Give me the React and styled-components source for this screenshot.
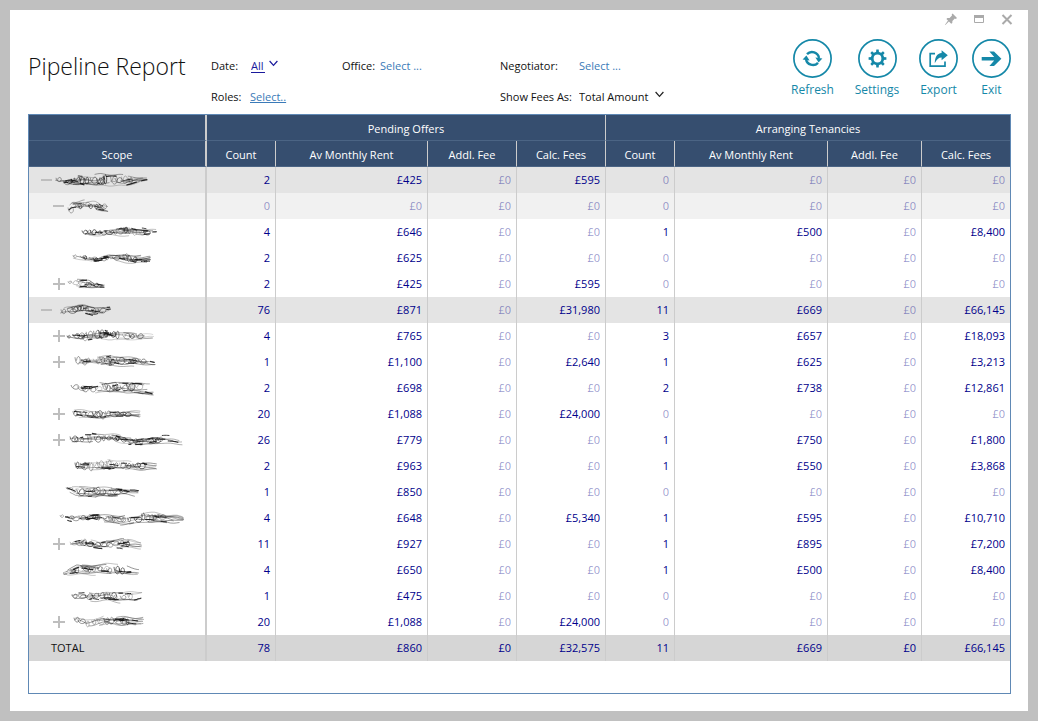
import React from "react";
import styled, { createGlobalStyle } from "styled-components";

const GlobalStyle = createGlobalStyle`
  *, *::before, *::after { box-sizing: border-box; }
  body { margin: 0; background: #c0c0c0; }
  body, button, select {
    font-family: "Open Sans", "Noto Sans", sans-serif;
    font-size: 11px;
    color: #111;
  }
`;

const Desktop = styled.div`
  display: flex;
  min-height: 100vh;
  padding: 10px;
`;

const WindowFrame = styled.main`
  flex: 1;
  min-width: 0;
  display: flex;
  flex-direction: column;
  padding: 0 17px 17px 18px;
  background: #fff;
`;

const TitleBar = styled.div`
  display: flex;
  justify-content: flex-end;
  gap: 12px;
  height: 18px;
  margin-right: -4px;
`;

const WindowButton = styled.button`
  width: 16px;
  height: 18px;
  padding: 0;
  border: 0;
  background: none;
  svg { display: block; }
`;

const Header = styled.header`
  display: flex;
  height: 86px;
`;

const Title = styled.h1`
  width: 183px;
  margin: 22px 0 0;
  font-size: 23px;
  line-height: 32px;
  font-weight: 300;
  white-space: nowrap;
`;

const Filters = styled.form`
  flex: 1;
  display: grid;
  grid-template-columns: 131px 158px auto;
  grid-template-rows: 31px 31px;
  align-content: start;
  padding-top: 22px;
`;

const Field = styled.div`
  display: flex;
  align-items: center;
  grid-column: ${(p) => p.$column};
  white-space: nowrap;
  line-height: 16px;
`;

const FieldLabel = styled.label`
  width: ${(p) => p.$width}px;
`;

const PickLink = styled.button`
  padding: 0;
  border: 0;
  background: none;
  color: #3a7ab8;
  line-height: 16px;
  text-decoration: ${(p) => (p.$underlined ? "underline" : "none")};
`;

const DropDown = styled.select`
  appearance: none;
  width: ${(p) => p.$width}px;
  height: ${(p) => (p.$linked ? 14 : 16)}px;
  padding: 0;
  border: 0;
  border-bottom: ${(p) => (p.$linked ? "1px solid #1a1a9c" : "0")};
  border-radius: 0;
  background: none;
  color: ${(p) => (p.$linked ? "#1a1a9c" : "#111")};
  line-height: 14px;
`;

const Caret = styled.svg`
  margin: 0 0 4px 4px;
`;

const Actions = styled.nav`
  display: flex;
  gap: 14px;
  padding-top: 11px;
`;

const ActionButton = styled.button`
  display: flex;
  flex-direction: column;
  align-items: center;
  width: ${(p) => p.$width}px;
  height: 62px;
  padding: 0;
  border: 0;
  background: none;
  color: #1588a8;
  font-size: 12px;
  line-height: 18px;
  white-space: nowrap;
  svg { flex: none; margin-bottom: 3px; }
`;

const Grid = styled.section`
  flex: 1;
  border: 1px solid #6089b5;
  padding-bottom: 32px;
`;

const Table = styled.table`
  width: 100%;
  table-layout: fixed;
  border-collapse: separate;
  border-spacing: 0;
`;

const divider = (edge) =>
  edge === "scope" ? "2px solid #ccc" : edge === "none" ? "0" : "1px solid #ccc";

const HeadCell = styled.th`
  height: 26px;
  padding: 2px 0 0;
  background: #364e6f;
  border-right: ${(p) => divider(p.$edge)};
  border-bottom: 1px solid #4b6484;
  color: #fff;
  font-weight: 400;
  line-height: 16px;
  text-align: center;
  white-space: nowrap;
`;

const tones = { group: "#e4e4e4", sub: "#f1f1f1", plain: "#fff", total: "#d6d6d6" };

const Row = styled.tr`
  background: ${(p) => tones[p.$tone]};
`;

const ScopeCell = styled.th`
  height: 26px;
  padding: 0;
  border-right: 2px solid #ccc;
  font-weight: 400;
  line-height: 16px;
  text-align: left;
`;

const ScopeContent = styled.div`
  display: flex;
  align-items: center;
  height: 26px;
  padding-left: ${(p) => p.$indent}px;
`;

const Expander = styled.button`
  flex: none;
  width: 12px;
  height: 12px;
  padding: 0;
  border: 0;
  background: none;
  svg { display: block; }
`;

const ExpanderSpace = styled.span`
  flex: none;
  width: 12px;
`;

const Scrawl = styled.svg`
  flex: none;
  overflow: visible;
  width: 100px;
  height: 26px;
`;

const NumberCell = styled.td`
  height: 26px;
  padding: 0 5px 0 0;
  border-right: ${(p) => divider(p.$edge)};
  color: ${(p) => (p.$faded ? "rgba(0, 0, 139, 0.42)" : "#00008b")};
  line-height: 16px;
  text-align: right;
`;

const columnWidths = [178, 69, 152, 89, 89, 69, 153, 94, 88];
const measures = ["Count", "Av Monthly Rent", "Addl. Fee", "Calc. Fees"];

// spine: points of [x, centre y, half height] measured from the scope cell's left edge
const rows = [
  { tone: "group", indent: 12, sign: "-", spine: [[26, 13, 4], [31, 15, 3], [45, 13, 5], [72, 13, 6], [95, 14, 5], [119, 12, 1]], v: ["2", "£425", "£0", "£595", "0", "£0", "£0", "£0"] },
  { tone: "sub", indent: 24, sign: "-", spine: [[38, 18, 4], [43, 14, 5], [54, 12, 4], [66, 13, 5], [80, 17, 3]], v: ["0", "£0", "£0", "£0", "0", "£0", "£0", "£0"] },
  { tone: "plain", indent: 24, spine: [[52, 13, 3], [64, 13, 4], [77, 14, 2], [90, 12, 5], [107, 13, 5], [132, 12, 3]], v: ["4", "£646", "£0", "£0", "1", "£500", "£0", "£8,400"] },
  { tone: "plain", indent: 24, spine: [[43, 11, 2], [55, 13, 3], [66, 15, 2], [80, 12, 4], [105, 14, 5], [122, 13, 4]], v: ["2", "£625", "£0", "£0", "0", "£0", "£0", "£0"] },
  { tone: "plain", indent: 24, sign: "+", spine: [[38, 11, 2], [45, 13, 5], [60, 13, 4], [66, 15, 2], [76, 16, 1]], v: ["2", "£425", "£0", "£595", "0", "£0", "£0", "£0"] },
  { tone: "group", indent: 12, sign: "-", spine: [[31, 15, 3], [44, 12, 4], [55, 12, 5], [67, 14, 4], [82, 12, 2]], v: ["76", "£871", "£0", "£31,980", "11", "£669", "£0", "£66,145"] },
  { tone: "plain", indent: 24, sign: "+", spine: [[37, 13, 3], [52, 13, 5], [72, 12, 6], [95, 13, 5], [125, 14, 4]], v: ["4", "£765", "£0", "£0", "3", "£657", "£0", "£18,093"] },
  { tone: "plain", indent: 24, sign: "+", spine: [[45, 12, 5], [62, 12, 4], [80, 12, 5], [106, 13, 4], [127, 15, 2]], v: ["1", "£1,100", "£0", "£2,640", "1", "£625", "£0", "£3,213"] },
  { tone: "plain", indent: 24, spine: [[41, 11, 3], [55, 14, 5], [71, 12, 5], [95, 12, 5], [125, 15, 5]], v: ["2", "£698", "£0", "£0", "2", "£738", "£0", "£12,861"] },
  { tone: "plain", indent: 24, sign: "+", spine: [[43, 13, 4], [55, 13, 5], [68, 14, 5], [87, 13, 3], [112, 13, 4]], v: ["20", "£1,088", "£0", "£24,000", "0", "£0", "£0", "£0"] },
  { tone: "plain", indent: 24, sign: "+", spine: [[40, 13, 4], [62, 11, 5], [84, 11, 4], [107, 15, 4], [130, 12, 4], [154, 14, 3]], v: ["26", "£779", "£0", "£0", "1", "£750", "£0", "£1,800"] },
  { tone: "plain", indent: 24, spine: [[45, 13, 5], [62, 13, 6], [80, 12, 5], [103, 13, 4], [128, 13, 4]], v: ["2", "£963", "£0", "£0", "1", "£550", "£0", "£3,868"] },
  { tone: "plain", indent: 24, spine: [[36, 9, 1], [47, 13, 5], [64, 13, 5], [88, 13, 4], [110, 15, 3]], v: ["1", "£850", "£0", "£0", "0", "£0", "£0", "£0"] },
  { tone: "plain", indent: 24, spine: [[30, 11, 2], [43, 14, 4], [65, 12, 4], [92, 15, 5], [118, 12, 5], [155, 15, 3]], v: ["4", "£648", "£0", "£5,340", "1", "£595", "£0", "£10,710"] },
  { tone: "plain", indent: 24, sign: "+", spine: [[40, 13, 3], [54, 12, 5], [72, 14, 3], [92, 13, 5], [113, 15, 4]], v: ["11", "£927", "£0", "£0", "1", "£895", "£0", "£7,200"] },
  { tone: "plain", indent: 24, spine: [[33, 17, 1], [48, 12, 5], [63, 13, 4], [76, 12, 5], [95, 13, 5], [110, 15, 3]], v: ["4", "£650", "£0", "£0", "1", "£500", "£0", "£8,400"] },
  { tone: "plain", indent: 24, spine: [[42, 13, 4], [60, 13, 5], [80, 13, 4], [96, 14, 5], [114, 13, 4]], v: ["1", "£475", "£0", "£0", "0", "£0", "£0", "£0"] },
  { tone: "plain", indent: 24, sign: "+", spine: [[44, 10, 3], [57, 15, 4], [75, 12, 5], [93, 13, 5], [115, 13, 4]], v: ["20", "£1,088", "£0", "£24,000", "0", "£0", "£0", "£0"] },
];
const total = ["78", "£860", "£0", "£32,575", "11", "£669", "£0", "£66,145"];

const edgeOf = (i) => (i === 7 ? "none" : "line");

function randomFrom(seed) {
  let s = seed * 7919 + 17;
  return () => {
    s = (s * 16807) % 2147483647;
    return s / 2147483647;
  };
}

function spineAt(spine, x) {
  for (let i = 1; i < spine.length; i++) {
    const a = spine[i - 1];
    const b = spine[i];
    if (x <= b[0]) {
      const t = Math.max(0, (x - a[0]) / (b[0] - a[0]));
      return [a[1] + (b[1] - a[1]) * t, a[2] + (b[2] - a[2]) * t];
    }
  }
  const last = spine[spine.length - 1];
  return [last[1], last[2]];
}

function scrawlStrokes(spine, seed) {
  const rnd = randomFrom(seed);
  const start = spine[0][0];
  const end = spine[spine.length - 1][0];
  const span = end - start;
  const strokes = [];
  const strand = (x0, length, lane, wobble, width, opacity) => {
    const phase = rnd() * 6;
    const drift = (rnd() - 0.5) * 0.5;
    const stop = Math.min(end, x0 + length);
    let d = "";
    for (let x = x0; x <= stop; x += 1.5) {
      const [y, h] = spineAt(spine, x);
      const t = lane + drift * ((x - x0) / length);
      const yy = y + t * h + Math.sin(x * 0.28 + phase) * wobble;
      d += `${d ? "L" : "M"}${x.toFixed(1)} ${yy.toFixed(1)}`;
    }
    strokes.push({ d, width, opacity });
  };
  // long pale strands
  for (let i = 0; i < span / 6; i++) {
    strand(start + rnd() * span * 0.85, 14 + rnd() * 30, rnd() * 2 - 1, 0.3 + rnd() * 0.6, 0.4 + rnd() * 0.3, 0.4 + rnd() * 0.4);
  }
  // short dark dashes
  for (let i = 0; i < span / 9; i++) {
    strand(start + rnd() * span * 0.93, 4 + rnd() * 7, rnd() * 1.9 - 0.95, 0.4, 0.9 + rnd() * 0.4, 0.85);
  }
  // slanted swirls, densest on the left
  for (let x = start + 1; x < start + span * 0.8; x += 3 + rnd() * 5) {
    const [y, h] = spineAt(spine, x);
    const rise = h * (0.7 + rnd() * 0.6);
    const w = 3 + rnd() * 6;
    const cy = y + (rnd() - 0.5) * h * 0.5;
    strokes.push({
      d: `M${x.toFixed(1)} ${(cy - rise / 2).toFixed(1)}C${(x + w * 0.2).toFixed(1)} ${(cy + rise).toFixed(1)} ${(x + w).toFixed(1)} ${(cy + rise * 0.7).toFixed(1)} ${(x + w).toFixed(1)} ${cy.toFixed(1)}S${(x + w * 0.4).toFixed(1)} ${(cy - rise * 0.9).toFixed(1)} ${(x + w * 0.3).toFixed(1)} ${(cy + 0.4).toFixed(1)}`,
      width: 0.4 + rnd() * 0.4,
      opacity: 0.5 + rnd() * 0.4,
    });
  }
  return strokes;
}

function HiddenName({ spine, seed, origin }) {
  return (
    <Scrawl viewBox={`${origin} 0 100 26`} role="img" aria-label="Name hidden" fill="none" stroke="#111">
      {scrawlStrokes(spine, seed).map((s, i) => (
        <path key={i} d={s.d} strokeWidth={s.width} opacity={s.opacity} />
      ))}
    </Scrawl>
  );
}

function ActionIcon({ children }) {
  return (
    <svg width="39" height="39" viewBox="0 0 39 39" fill="none" stroke="#1588a8">
      <circle cx="19.5" cy="19.5" r="18.6" strokeWidth="1.7" />
      {children}
    </svg>
  );
}

const actions = [
  {
    label: "Refresh", width: 45,
    icon: (
      <>
        <path d="M14 15.2A7 7 0 0 1 26 19M25 23.8A7 7 0 0 1 13 20" strokeWidth="2.4" />
        <path d="M22.4 18.4L29.4 19.4L25.6 23.4ZM9.6 20.6L13.4 16.6L16.6 21.6Z" fill="#1588a8" stroke="none" />
      </>
    ),
  },
  {
    label: "Settings", width: 56,
    icon: (
      <>
        <circle cx="19.5" cy="19.5" r="5.3" strokeWidth="2.8" />
        {[0, 45, 90, 135, 180, 225, 270, 315].map((a) => (
          <path key={a} d="M18 14L18.3 10.6H20.7L21 14Z" fill="#1588a8" stroke="none" transform={`rotate(${a} 19.5 19.5)`} />
        ))}
      </>
    ),
  },
  {
    label: "Export", width: 39,
    icon: (
      <>
        <path d="M16 14.6H11.2V27.2H26V22.4" strokeWidth="1.7" />
        <path d="M22.6 11.2L28.8 16.2L22.6 21.2V18.4C19.6 18.4 17.6 20.4 15.8 24.2C15.8 18.4 18 14.4 22.6 14Z" fill="#1588a8" stroke="none" />
      </>
    ),
  },
  {
    label: "Exit", width: 39,
    icon: <path d="M9.7 18V21.6H22.2L17.4 27H22L29.4 19.8L22 12.6H17.4L22.2 18Z" fill="#1588a8" stroke="none" />,
  },
];

function Chevron({ color }) {
  return (
    <Caret width="9" height="7" viewBox="0 0 9 7" fill="none" stroke={color} strokeWidth="1.2" aria-hidden="true">
      <path d="M0.6 1L4.5 5.4L8.4 1" />
    </Caret>
  );
}

export default function App() {
  return (
    <Desktop>
      <GlobalStyle />
      <WindowFrame>
        <TitleBar>
          <WindowButton aria-label="Pin">
            <svg width="16" height="18" viewBox="0 0 16 18" fill="#aaa">
              <path d="M9.6 3.6L14 8L12.8 8.9L11.8 8.6L9.4 11L9.3 13L8.2 13.8L5.9 11.6L2.4 15L2 14.8L5 10.6L3.4 9L4.4 8L6.6 8L9 5.6L8.7 4.6Z" />
            </svg>
          </WindowButton>
          <WindowButton aria-label="Maximize">
            <svg width="16" height="18" viewBox="0 0 16 18" fill="none" stroke="#aaa">
              <path d="M3.5 6V12.5H12.5V6" />
              <path d="M3 6.5H13" strokeWidth="3" />
            </svg>
          </WindowButton>
          <WindowButton aria-label="Close">
            <svg width="16" height="18" viewBox="0 0 16 18" fill="none" stroke="#aaa" strokeWidth="2">
              <path d="M3.5 5L12.5 14M12.5 5L3.5 14" />
            </svg>
          </WindowButton>
        </TitleBar>
        <Header>
          <Title>Pipeline Report</Title>
          <Filters>
            <Field $column={1}>
              <FieldLabel htmlFor="date" $width={40}>Date:</FieldLabel>
              <DropDown id="date" $width={14} $linked><option>All</option></DropDown>
              <Chevron color="#1a1a9c" />
            </Field>
            <Field $column={2}>
              <FieldLabel htmlFor="office" $width={38}>Office:</FieldLabel>
              <PickLink id="office" type="button">Select ...</PickLink>
            </Field>
            <Field $column={3}>
              <FieldLabel htmlFor="negotiator" $width={79}>Negotiator:</FieldLabel>
              <PickLink id="negotiator" type="button">Select ...</PickLink>
            </Field>
            <Field $column={1}>
              <FieldLabel htmlFor="roles" $width={39}>Roles:</FieldLabel>
              <PickLink id="roles" type="button" $underlined>Select..</PickLink>
            </Field>
            <Field $column={3}>
              <FieldLabel htmlFor="fees" $width={79}>Show Fees As:</FieldLabel>
              <DropDown id="fees" $width={72}><option>Total Amount</option></DropDown>
              <Chevron color="#222" />
            </Field>
          </Filters>
          <Actions>
            {actions.map((a) => (
              <ActionButton key={a.label} $width={a.width}>
                <ActionIcon>{a.icon}</ActionIcon>
                {a.label}
              </ActionButton>
            ))}
          </Actions>
        </Header>
        <Grid>
          <Table>
            <colgroup>
              {columnWidths.map((w, i) => <col key={i} width={w} />)}
            </colgroup>
            <thead>
              <tr>
                <HeadCell $edge="scope" />
                <HeadCell colSpan={4} scope="colgroup">Pending Offers</HeadCell>
                <HeadCell colSpan={4} scope="colgroup" $edge="none">Arranging Tenancies</HeadCell>
              </tr>
              <tr>
                <HeadCell scope="col" $edge="scope">Scope</HeadCell>
                {[...measures, ...measures].map((m, i) => (
                  <HeadCell key={i} scope="col" $edge={edgeOf(i)}>{m}</HeadCell>
                ))}
              </tr>
            </thead>
            <tbody>
              {rows.map((r, n) => (
                <Row key={n} $tone={r.tone}>
                  <ScopeCell scope="row">
                    <ScopeContent $indent={r.indent}>
                      {r.sign ? (
                        <Expander aria-label={r.sign === "+" ? "Expand" : "Collapse"}>
                          <svg width="12" height="12" viewBox="0 0 12 12" fill="none" stroke="#bebebe" strokeWidth="2">
                            <path d={r.sign === "+" ? "M0 6H12M6 0V12" : "M0 6H11"} />
                          </svg>
                        </Expander>
                      ) : <ExpanderSpace />}
                      <HiddenName spine={r.spine} seed={n + 1} origin={r.indent + 12} />
                    </ScopeContent>
                  </ScopeCell>
                  {r.v.map((v, i) => (
                    <NumberCell key={i} $edge={edgeOf(i)} $faded={v === "0" || v === "£0"}>{v}</NumberCell>
                  ))}
                </Row>
              ))}
            </tbody>
            <tfoot>
              <Row $tone="total">
                <ScopeCell scope="row"><ScopeContent $indent={22}>TOTAL</ScopeContent></ScopeCell>
                {total.map((v, i) => <NumberCell key={i} $edge={edgeOf(i)}>{v}</NumberCell>)}
              </Row>
            </tfoot>
          </Table>
        </Grid>
      </WindowFrame>
    </Desktop>
  );
}
